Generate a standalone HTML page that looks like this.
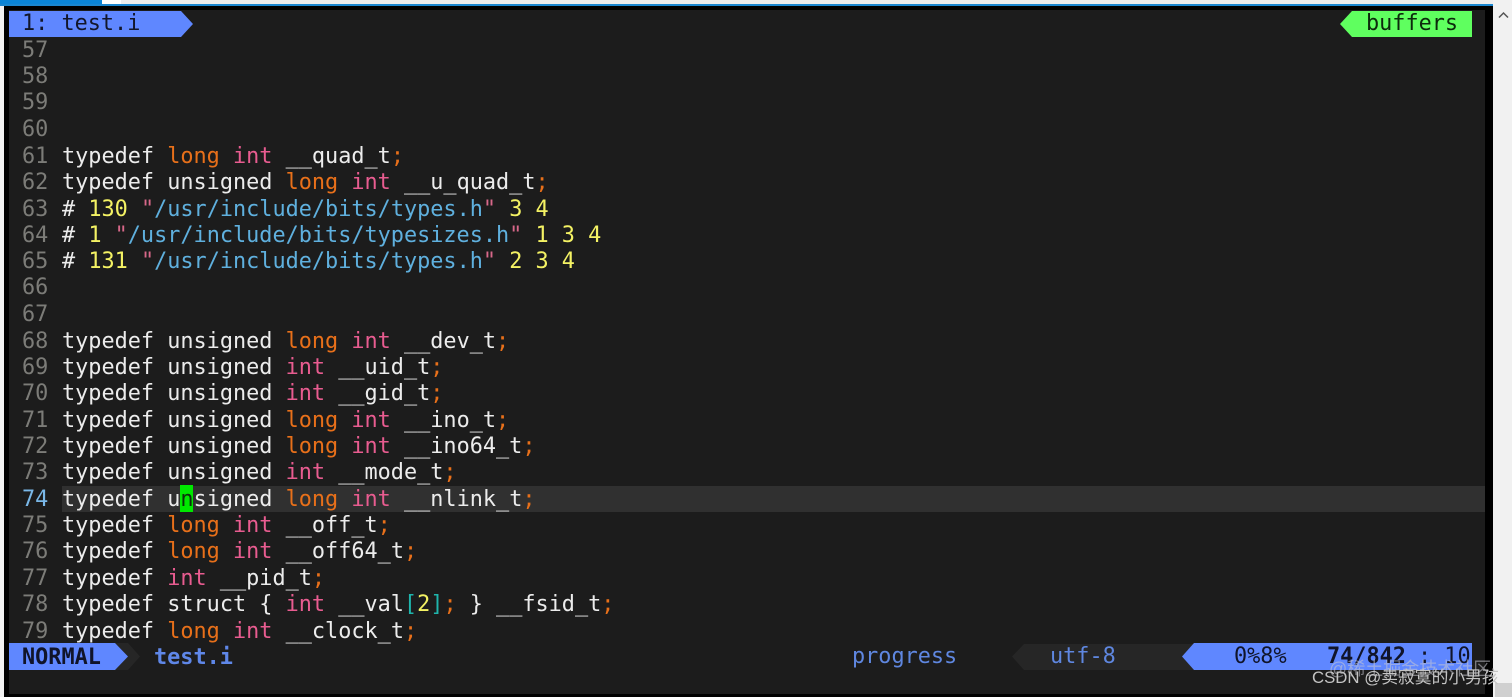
<!DOCTYPE html>
<html><head><meta charset="utf-8">
<style>
html,body{margin:0;padding:0;background:#000;}
#p{position:relative;width:1512px;height:697px;overflow:hidden;background:#000;font-family:"DejaVu Sans Mono",monospace;font-size:21.85px;color:#ececec;}
.a{position:absolute;}
.l{position:absolute;white-space:pre;height:26px;line-height:26px;left:62px;}
.n{position:absolute;white-space:pre;height:26px;line-height:26px;left:22px;color:#7c7c78;}
.o{color:#e8701a}.i{color:#e85c90}.s{color:#5fb0de}.q{color:#d8688a}.y{color:#f4f264}.c{color:#1fb5ac}
</style></head><body><div id="p">
<div class="a" style="left:0;top:0;width:1512px;height:4px;background:#ececec"></div>
<div class="a" style="left:0;top:0;width:102px;height:5px;background:#0a84d6"></div>
<div class="a" style="left:102px;top:0;width:19px;height:4px;background:#fff"></div>
<div class="a" style="left:0;top:4px;width:1493px;height:2px;background:#1a86cf"></div>
<div class="a" style="left:0;top:6px;width:4px;height:691px;background:#f2f2f2"></div>
<div class="a" style="left:9px;top:10px;width:1476px;height:684px;background:#1c1c1c"></div>
<div class="a" style="left:1493px;top:0;width:19px;height:697px;background:#f1f1f1"></div>
<div class="a" style="left:1495px;top:683px;width:17px;height:14px;background:#d0d0d0"></div>
<svg class="a" style="left:1498px;top:11px" width="12" height="8"><path d="M1 6.5L5.5 2L10 6.5" fill="none" stroke="#555" stroke-width="1.5"/></svg>

<svg class="a" style="left:0;top:0" width="1512" height="697">
<polygon points="9,11 181,11 193,24 181,37 9,37" fill="#5f87ff"/>
<polygon points="1472,11 1352,11 1340,24 1352,37 1472,37" fill="#5fff5f"/>
<polygon points="115,643 128,643 140,656.5 128,670 115,670" fill="#262626"/>
<polygon points="9,643 115,643 128,656.5 115,670 9,670" fill="#5f87ff"/>
<polygon points="1024,644 1012,656.5 1024,670 1194,670 1182,656.5 1194,644" fill="#262626"/>
<polygon points="1194,643 1182,656.5 1194,670 1472,670 1472,643" fill="#5f87ff"/>
</svg>
<div class="a" style="left:62px;top:486px;width:1423px;height:26px;background:#303030"></div>
<div class="a" style="left:180px;top:485px;width:13px;height:27px;background:#00e800"></div>

<div class="l" style="left:22px;top:11px;color:#12162a">1: test.i</div>
<div class="l" style="left:1366px;top:11px;color:#0c2a0c">buffers</div>

<div class="n" style="top:38px">57</div>
<div class="n" style="top:64px">58</div>
<div class="n" style="top:90px">59</div>
<div class="n" style="top:117px">60</div>
<div class="n" style="top:144px">61</div><div class="l" style="top:144px">typedef <span class="o">long</span> <span class="i">int</span> __quad_t<span class="o">;</span></div>
<div class="n" style="top:170px">62</div><div class="l" style="top:170px">typedef unsigned <span class="o">long</span> <span class="i">int</span> __u_quad_t<span class="o">;</span></div>
<div class="n" style="top:197px">63</div><div class="l" style="top:197px"># <span class="y">130</span> <span class="q">"</span><span class="s">/usr/include/bits/types.h</span><span class="q">"</span> <span class="y">3 4</span></div>
<div class="n" style="top:223px">64</div><div class="l" style="top:223px"># <span class="y">1</span> <span class="q">"</span><span class="s">/usr/include/bits/typesizes.h</span><span class="q">"</span> <span class="y">1 3 4</span></div>
<div class="n" style="top:249px">65</div><div class="l" style="top:249px"># <span class="y">131</span> <span class="q">"</span><span class="s">/usr/include/bits/types.h</span><span class="q">"</span> <span class="y">2 3 4</span></div>
<div class="n" style="top:275px">66</div>
<div class="n" style="top:302px">67</div>
<div class="n" style="top:329px">68</div><div class="l" style="top:329px">typedef unsigned <span class="o">long</span> <span class="i">int</span> __dev_t<span class="o">;</span></div>
<div class="n" style="top:355px">69</div><div class="l" style="top:355px">typedef unsigned <span class="i">int</span> __uid_t<span class="o">;</span></div>
<div class="n" style="top:381px">70</div><div class="l" style="top:381px">typedef unsigned <span class="i">int</span> __gid_t<span class="o">;</span></div>
<div class="n" style="top:408px">71</div><div class="l" style="top:408px">typedef unsigned <span class="o">long</span> <span class="i">int</span> __ino_t<span class="o">;</span></div>
<div class="n" style="top:434px">72</div><div class="l" style="top:434px">typedef unsigned <span class="o">long</span> <span class="i">int</span> __ino64_t<span class="o">;</span></div>
<div class="n" style="top:460px">73</div><div class="l" style="top:460px">typedef unsigned <span class="i">int</span> __mode_t<span class="o">;</span></div>
<div class="n" style="top:487px;color:#7ab8e8">74</div><div class="l" style="top:487px">typedef u<span style="color:#0b300b">n</span>signed <span class="o">long</span> <span class="i">int</span> __nlink_t<span class="o">;</span></div>
<div class="n" style="top:513px">75</div><div class="l" style="top:513px">typedef <span class="o">long</span> <span class="i">int</span> __off_t<span class="o">;</span></div>
<div class="n" style="top:539px">76</div><div class="l" style="top:539px">typedef <span class="o">long</span> <span class="i">int</span> __off64_t<span class="o">;</span></div>
<div class="n" style="top:566px">77</div><div class="l" style="top:566px">typedef <span class="i">int</span> __pid_t<span class="o">;</span></div>
<div class="n" style="top:592px">78</div><div class="l" style="top:592px">typedef struct { <span class="i">int</span> __val<span class="c">[</span><span class="y">2</span><span class="c">]</span><span class="o">;</span> } __fsid_t<span class="o">;</span></div>
<div class="n" style="top:619px">79</div><div class="l" style="top:619px">typedef <span class="o">long</span> <span class="i">int</span> __clock_t<span class="o">;</span></div>

<div class="l" style="left:22px;top:645px;color:#10142a;font-weight:bold">NORMAL</div>
<div class="l" style="left:154px;top:645px;color:#5f87e8;font-weight:bold">test.i</div>
<div class="l" style="left:852px;top:644px;color:#5f87e0">progress</div>
<div class="l" style="left:1050px;top:644px;color:#5f87e0">utf-8</div>
<div class="l" style="left:1234px;top:644px;color:#10142a">0%8%</div>
<div class="l" style="left:1327px;top:644px;color:#10142a;font-weight:bold">74/842</div>
<div class="l" style="left:1418px;top:644px;color:#10142a">: 10</div>

<div class="a" style="left:1329px;top:655px;white-space:pre;font:18px 'Liberation Sans','Noto Sans CJK SC',sans-serif;color:rgba(200,200,210,.55)">@稀土掘金技术社区</div>
<div class="a" style="left:1312px;top:664px;white-space:pre;font:16.8px 'Liberation Sans','Noto Sans CJK SC',sans-serif;color:#c4c4c4">CSDN @卖寂寞的小男孩</div>
</div></body></html>
